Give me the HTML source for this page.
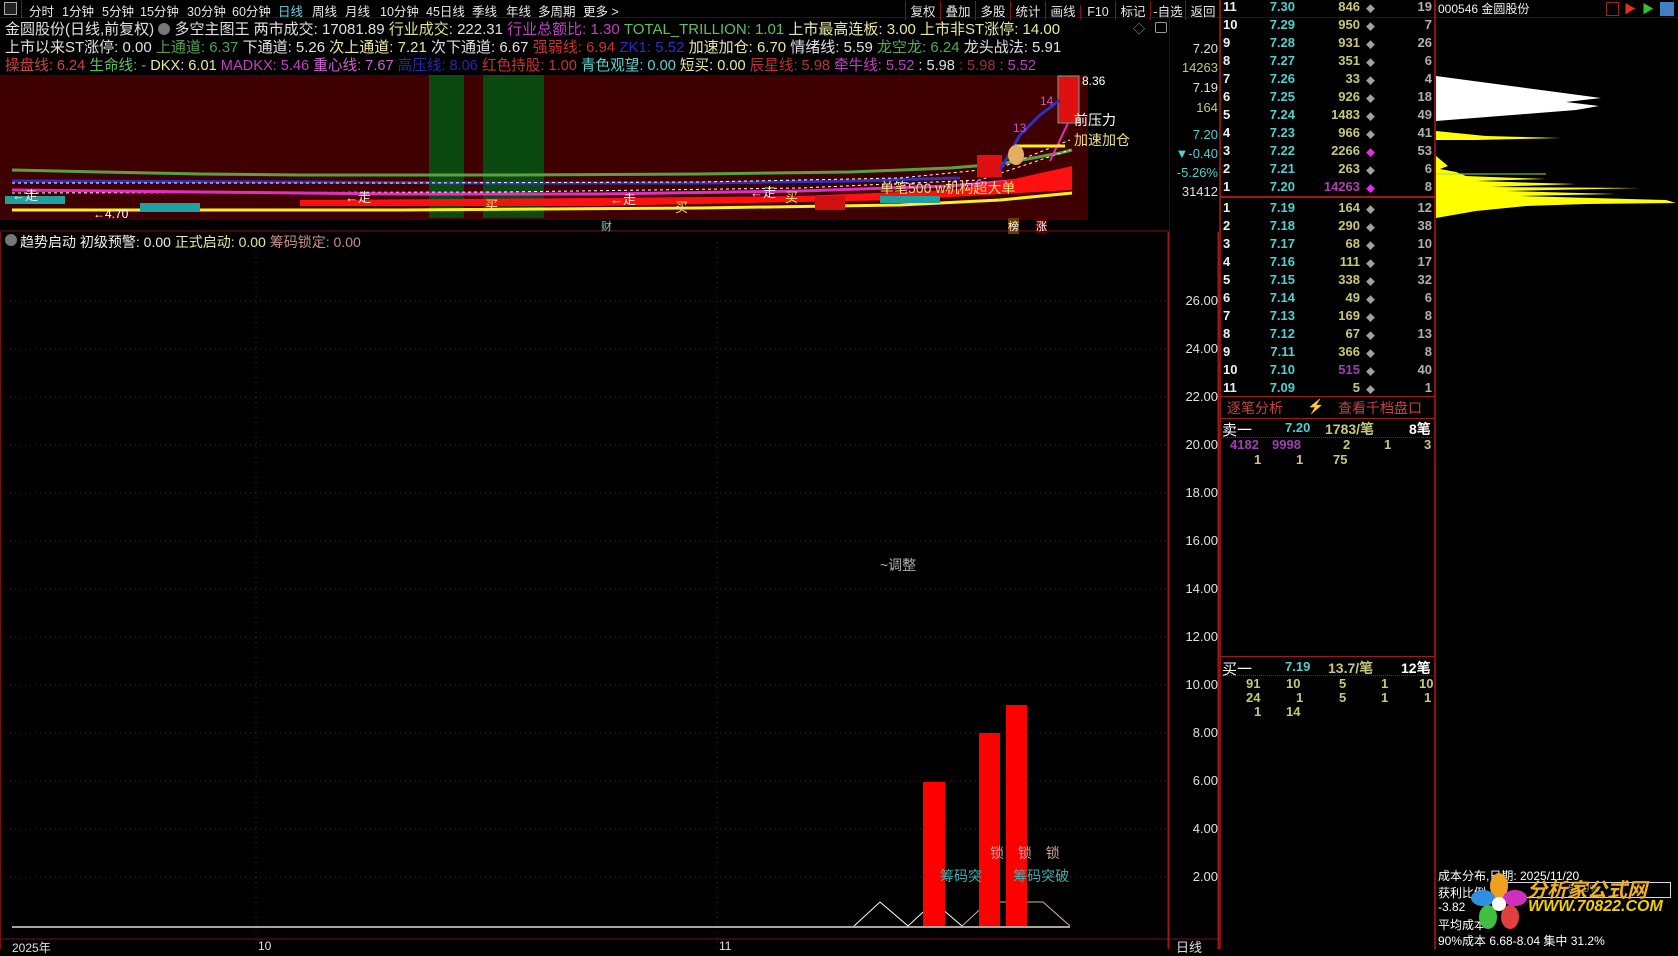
<!DOCTYPE html>
<html><head><meta charset="utf-8">
<style>
*{margin:0;padding:0;box-sizing:border-box}
body{width:1678px;height:949px;background:#000;overflow:hidden;position:relative;font-family:"Liberation Sans","Noto Sans CJK SC",sans-serif;color:#e0e0e0}
.a{position:absolute;white-space:nowrap}
.tb{font-size:12.5px;top:1px;color:#e8e8e8;position:absolute;white-space:nowrap}
.info{font-size:15px;left:5px}
.ob{font-size:13px;font-weight:bold;font-family:"Liberation Sans","Noto Sans CJK SC",sans-serif}
.r{position:absolute;height:18px;left:1220px;width:215px;font-size:13px;font-weight:bold}
.r span{position:absolute;top:0}
.n{left:3px;color:#f0f0f0}
.p{right:140px;color:#50d0d0}
.v{right:75px;color:#c8c878}
.d{left:146px;color:#a0a0a0;font-size:9px;top:3px!important}
.c{right:3px;color:#b0b0b0}
.ax{position:absolute;font-size:13px;color:#e0e0e0;right:460px;text-align:right}
.g{color:#c8c878}
</style></head><body>

<!-- top toolbar -->
<div class="a" style="left:0;top:0;width:1678px;height:18px;background:#000;border-bottom:1px solid #5a0000"></div>
<div class="a" style="left:4px;top:2px;width:13px;height:13px;border:1px solid #aaa;background:#222"></div>
<div class="a" style="left:21px;top:0;width:1px;height:18px;background:#8a1010"></div>
<span class="tb" style="left:29px">分时</span>
<span class="tb" style="left:62px">1分钟</span>
<span class="tb" style="left:102px">5分钟</span>
<span class="tb" style="left:140px">15分钟</span>
<span class="tb" style="left:187px">30分钟</span>
<span class="tb" style="left:232px">60分钟</span>
<span class="tb" style="left:278px;color:#70d0e0">日线</span>
<span class="tb" style="left:312px">周线</span>
<span class="tb" style="left:345px">月线</span>
<span class="tb" style="left:380px">10分钟</span>
<span class="tb" style="left:426px">45日线</span>
<span class="tb" style="left:472px">季线</span>
<span class="tb" style="left:506px">年线</span>
<span class="tb" style="left:538px">多周期</span>
<span class="tb" style="left:583px">更多 &gt;</span>
<div class="tb" style="left:905px">
<span style="display:inline-block;width:35px;text-align:center;border-left:1px solid #8a1010">复权</span><span style="display:inline-block;width:35px;text-align:center;border-left:1px solid #8a1010">叠加</span><span style="display:inline-block;width:35px;text-align:center;border-left:1px solid #8a1010">多股</span><span style="display:inline-block;width:35px;text-align:center;border-left:1px solid #8a1010">统计</span><span style="display:inline-block;width:35px;text-align:center;border-left:1px solid #8a1010">画线</span><span style="display:inline-block;width:35px;text-align:center;border-left:1px solid #8a1010">F10</span><span style="display:inline-block;width:35px;text-align:center;border-left:1px solid #8a1010">标记</span><span style="display:inline-block;width:35px;text-align:center;border-left:1px solid #8a1010">-自选</span><span style="display:inline-block;width:35px;text-align:center;border-left:1px solid #8a1010">返回</span></div>

<!-- info lines -->
<div class="a info" style="top:18px">金圆股份(日线,前复权) <span style="display:inline-block;width:12px;height:12px;border-radius:6px;background:#777;vertical-align:-1px"></span> 多空主图王 两市成交: 17081.89 <span style="color:#e0e090">行业成交</span>: 222.31 <span style="color:#c040c0">行业总额比: 1.30</span> <span style="color:#60c060">TOTAL_TRILLION: 1.01</span> <span style="color:#e8e8a0">上市最高连板: 3.00 上市非ST涨停: 14.00</span></div>
<div class="a info" style="top:36px">上市以来ST涨停: 0.00 <span style="color:#50a050">上通道: 6.37</span> 下通道: 5.26 <span style="color:#e8e8a0">次上通道: 7.21</span> 次下通道: 6.67 <span style="color:#d03030">强弱线: 6.94</span> <span style="color:#3030c0">ZK1: 5.52</span> <span style="color:#e8e8a0">加速加仓: 6.70</span> 情绪线: 5.59 <span style="color:#50b050">龙空龙: 6.24</span> 龙头战法: 5.91</div>
<div class="a info" style="top:54px;font-size:14.6px"><span style="color:#d04040">操盘线: 6.24</span> <span style="color:#60c060">生命线: -</span> <span style="color:#e8e8a0">DKX: 6.01</span> <span style="color:#c040c0">MADKX: 5.46</span> <span style="color:#d060d0">重心线: 7.67</span> <span style="color:#2828a8">高压线: 8.06</span> <span style="color:#d03030">红色持股: 1.00</span> <span style="color:#60d0d0">青色观望: 0.00</span> <span style="color:#e8e8a0">短买: 0.00</span> <span style="color:#c03030">辰星线: 5.98</span> <span style="color:#c040c0">牵牛线: 5.52</span> : 5.98 <span style="color:#a03030">: 5.98</span> <span style="color:#c040c0">: 5.52</span></div>
<div class="a" style="left:1133px;top:20px;font-size:12px;color:#999">◇</div>
<div class="a" style="left:1155px;top:22px;width:12px;height:11px;border:1px solid #999;border-radius:2px"></div>

<!-- upper chart -->
<svg class="a" style="left:0;top:0" width="1170" height="232">
<rect x="0" y="75" width="1088" height="145" fill="#3e0000"/>
<rect x="429" y="75" width="35" height="143" fill="#0a4a10"/>
<rect x="483" y="75" width="61" height="143" fill="#0a4a10"/>
<line x1="0" y1="231" x2="1170" y2="231" stroke="#7a1010"/>
<polyline fill="none" stroke="#5aa040" stroke-width="3" points="12,170 100,172 200,174 300,175 500,175 700,174 850,172 950,168 1000,164 1060,153 1072,150"/>
<polyline fill="none" stroke="#3030c0" stroke-width="3" points="12,181 300,182 500,183 700,183 850,181 960,178"/>
<polyline fill="none" stroke="#fff" stroke-width="1" stroke-dasharray="3,3" points="12,183 400,183 700,182 900,178 1000,168 1070,140"/>
<polyline fill="none" stroke="#fff" stroke-width="1" stroke-dasharray="3,3" points="12,193 500,192 800,188 980,180 1070,150"/>
<polyline fill="none" stroke="#e030c0" stroke-width="3" points="12,190 200,192 400,194 600,194 800,191 950,186 1070,176"/>
<polygon fill="#ff1010" points="300,200 600,198 800,196 950,190 1010,180 1072,166 1072,190 900,200 600,206 300,206"/>
<polyline fill="none" stroke="#ffee20" stroke-width="3" points="12,210 400,210 700,208 900,205 1000,200 1072,193"/>
<rect x="5" y="196" width="60" height="8" fill="#20a0a0"/>
<rect x="140" y="203" width="60" height="8" fill="#20a0a0"/>
<rect x="880" y="196" width="60" height="7" fill="#20a0a0"/>
<rect x="815" y="196" width="30" height="14" fill="#d01010"/>
<rect x="977" y="155" width="25" height="22" fill="#e01010"/>
<rect x="1058" y="76" width="21" height="47" fill="#e01010" stroke="#6aa0a0"/>
<polyline fill="none" stroke="#3030c0" stroke-width="3" points="1000,170 1020,135 1040,115 1060,100"/>
<line x1="1050" y1="161" x2="1068" y2="123" stroke="#e030c0" stroke-width="2"/>
<line x1="1015" y1="146" x2="1065" y2="146" stroke="#ffee20" stroke-width="3"/>
<ellipse cx="1016" cy="155" rx="8" ry="10" fill="#e0b060"/>
<line x1="1170" y1="18" x2="1170" y2="232" stroke="#7a1010"/>
<line x1="1170" y1="40" x2="1220" y2="40" stroke="#7a1010"/>
<line x1="1170" y1="206" x2="1220" y2="206" stroke="#7a1010"/>
</svg>
<div class="a" style="left:12px;top:185px;font-size:13px;color:#f0f0f0">←走</div>
<div class="a" style="left:93px;top:207px;font-size:12px;color:#fff">←4.70</div>
<div class="a" style="left:345px;top:187px;font-size:13px;color:#f0f0f0">←走</div>
<div class="a" style="left:485px;top:195px;font-size:13px;color:#f0e080">买</div>
<div class="a" style="left:610px;top:189px;font-size:13px;color:#f0f0f0">←走</div>
<div class="a" style="left:675px;top:197px;font-size:13px;color:#f0e080">买</div>
<div class="a" style="left:750px;top:182px;font-size:13px;color:#f0f0f0">←走</div>
<div class="a" style="left:785px;top:187px;font-size:13px;color:#f0e080">买</div>
<div class="a" style="left:880px;top:178px;font-size:14px;color:#f0e080">单笔500 w机构超大单</div>
<div class="a" style="left:1074px;top:110px;font-size:14px;color:#fff">前压力</div>
<div class="a" style="left:1074px;top:130px;font-size:14px;color:#f0e080">加速加仓</div>
<div class="a" style="left:1082px;top:74px;font-size:12px;color:#fff">8.36</div>
<div class="a" style="left:1040px;top:94px;font-size:12px;color:#d050d0">14</div>
<div class="a" style="left:1013px;top:121px;font-size:12px;color:#d050d0">13</div>
<div class="a" style="left:601px;top:218px;font-size:11px;color:#7cc">财</div>
<div class="a" style="left:1008px;top:218px;font-size:11px;color:#fff;background:#6a3a00">榜</div>
<div class="a" style="left:1036px;top:218px;font-size:11px;color:#fff;background:#500">涨</div>

<div class="ax" style="top:41px">7.20</div>
<div class="ax g" style="top:60px">14263</div>
<div class="ax" style="top:80px">7.19</div>
<div class="ax g" style="top:100px">164</div>
<div class="ax" style="top:127px;color:#50d0d0">7.20</div>
<div class="ax" style="top:146px;color:#50d0d0">▼-0.40</div>
<div class="ax" style="top:165px;color:#50d0d0">-5.26%</div>
<div class="ax" style="top:184px">31412</div>

<!-- lower panel -->
<div class="a" style="left:5px;top:234px;width:12px;height:12px;border-radius:6px;background:#777"></div>
<div class="a" style="left:20px;top:232px;font-size:14px;color:#f0f0f0">趋势启动 初级预警: 0.00 <span style="color:#e8e8a0">正式启动: 0.00</span> <span style="color:#c89090">筹码锁定: 0.00</span></div>
<svg class="a" style="left:0;top:232px" width="1220" height="717">
<line x1="0.5" y1="0" x2="0.5" y2="717" stroke="#7a1010"/>
<g stroke="#5a2020" stroke-dasharray="1,4">
<line x1="256" y1="10" x2="256" y2="717"/><line x1="717" y1="10" x2="717" y2="717"/>
<line x1="0" y1="69" x2="1168" y2="69"/><line x1="0" y1="117" x2="1168" y2="117"/><line x1="0" y1="165" x2="1168" y2="165"/><line x1="0" y1="213" x2="1168" y2="213"/><line x1="0" y1="261" x2="1168" y2="261"/><line x1="0" y1="309" x2="1168" y2="309"/><line x1="0" y1="357" x2="1168" y2="357"/><line x1="0" y1="405" x2="1168" y2="405"/><line x1="0" y1="453" x2="1168" y2="453"/><line x1="0" y1="501" x2="1168" y2="501"/><line x1="0" y1="549" x2="1168" y2="549"/><line x1="0" y1="597" x2="1168" y2="597"/><line x1="0" y1="645" x2="1168" y2="645"/>
</g>
<line x1="12" y1="695" x2="1070" y2="695" stroke="#e8d8d0" stroke-width="1.5"/>
<polyline fill="none" stroke="#fff" points="854,694 880,670 908,694 934,670 962,694"/>
<polyline fill="none" stroke="#d8b0a0" points="962,694 988,670 1043,670 1070,694"/>
<rect x="923" y="550" width="22" height="144" fill="#ff0000"/>
<rect x="979" y="501" width="21" height="193" fill="#ff0000"/>
<rect x="1006" y="473" width="21" height="221" fill="#ff0000"/>
<line x1="0" y1="707" x2="1220" y2="707" stroke="#7a1010"/>
<line x1="1168.5" y1="0" x2="1168.5" y2="717" stroke="#a01818" stroke-width="2"/>
<line x1="1218.5" y1="0" x2="1218.5" y2="717" stroke="#a01818" stroke-width="2"/>
</svg>
<div class="a" style="left:880px;top:555px;font-size:14px;color:#b0b0b0">~调整</div>
<div class="a" style="left:990px;top:843px;font-size:14px;color:#d0a0a0;word-spacing:10px">锁 锁 锁</div>
<div class="a" style="left:940px;top:866px;font-size:14px;color:#40b0b0">筹码突&nbsp;&nbsp;&nbsp;&nbsp;&nbsp;&nbsp;&nbsp;&nbsp;筹码突破</div>
<div class="ax" style="top:293px">26.00</div>
<div class="ax" style="top:341px">24.00</div>
<div class="ax" style="top:389px">22.00</div>
<div class="ax" style="top:437px">20.00</div>
<div class="ax" style="top:485px">18.00</div>
<div class="ax" style="top:533px">16.00</div>
<div class="ax" style="top:581px">14.00</div>
<div class="ax" style="top:629px">12.00</div>
<div class="ax" style="top:677px">10.00</div>
<div class="ax" style="top:725px">8.00</div>
<div class="ax" style="top:773px">6.00</div>
<div class="ax" style="top:821px">4.00</div>
<div class="ax" style="top:869px">2.00</div>
<div class="a" style="left:12px;top:939px;font-size:12px">2025年</div>
<div class="a" style="left:258px;top:939px;font-size:12px">10</div>
<div class="a" style="left:719px;top:939px;font-size:12px">11</div>
<div class="a" style="left:1176px;top:937px;font-size:13px">日线</div>

<!-- order book -->
<div class="a" style="left:1219px;top:0;width:2px;height:949px;background:#8a1010"></div>
<div class="a" style="left:1434px;top:0;width:2px;height:949px;background:#8a1010"></div>
<div class="a" style="left:1220px;top:196px;width:215px;height:2px;background:#a01818"></div>
<div class="a" style="left:1220px;top:396px;width:215px;height:1px;background:#a01818"></div>
<div class="a" style="left:1220px;top:418px;width:215px;height:1px;background:#a01818"></div>
<div class="a" style="left:1220px;top:656px;width:215px;height:1px;background:#a01818"></div>
<div class="a" style="left:1222px;top:437px;width:212px;border-top:1px dotted #603030"></div>
<div class="a" style="left:1222px;top:675px;width:212px;border-top:1px dotted #603030"></div>

<div class="r" style="top:-1px"><span class="n">11</span><span class="p">7.30</span><span class="v">846</span><span class="d">◆</span><span class="c">19</span></div>
<div class="r" style="top:17px"><span class="n">10</span><span class="p">7.29</span><span class="v">950</span><span class="d">◆</span><span class="c">7</span></div>
<div class="r" style="top:35px"><span class="n">9</span><span class="p">7.28</span><span class="v">931</span><span class="d">◆</span><span class="c">26</span></div>
<div class="r" style="top:53px"><span class="n">8</span><span class="p">7.27</span><span class="v">351</span><span class="d">◆</span><span class="c">6</span></div>
<div class="r" style="top:71px"><span class="n">7</span><span class="p">7.26</span><span class="v">33</span><span class="d">◆</span><span class="c">4</span></div>
<div class="r" style="top:89px"><span class="n">6</span><span class="p">7.25</span><span class="v">926</span><span class="d">◆</span><span class="c">18</span></div>
<div class="r" style="top:107px"><span class="n">5</span><span class="p">7.24</span><span class="v">1483</span><span class="d">◆</span><span class="c">49</span></div>
<div class="r" style="top:125px"><span class="n">4</span><span class="p">7.23</span><span class="v">966</span><span class="d">◆</span><span class="c">41</span></div>
<div class="r" style="top:143px"><span class="n">3</span><span class="p">7.22</span><span class="v">2266</span><span class="d" style="color:#e030e0">◆</span><span class="c">53</span></div>
<div class="r" style="top:161px"><span class="n">2</span><span class="p">7.21</span><span class="v">263</span><span class="d">◆</span><span class="c">6</span></div>
<div class="r" style="top:179px"><span class="n">1</span><span class="p">7.20</span><span class="v" style="color:#b040b0">14263</span><span class="d" style="color:#e030e0">◆</span><span class="c">8</span></div>

<div class="r" style="top:200px"><span class="n">1</span><span class="p">7.19</span><span class="v">164</span><span class="d">◆</span><span class="c">12</span></div>
<div class="r" style="top:218px"><span class="n">2</span><span class="p">7.18</span><span class="v">290</span><span class="d">◆</span><span class="c">38</span></div>
<div class="r" style="top:236px"><span class="n">3</span><span class="p">7.17</span><span class="v">68</span><span class="d">◆</span><span class="c">10</span></div>
<div class="r" style="top:254px"><span class="n">4</span><span class="p">7.16</span><span class="v">111</span><span class="d">◆</span><span class="c">17</span></div>
<div class="r" style="top:272px"><span class="n">5</span><span class="p">7.15</span><span class="v">338</span><span class="d">◆</span><span class="c">32</span></div>
<div class="r" style="top:290px"><span class="n">6</span><span class="p">7.14</span><span class="v">49</span><span class="d">◆</span><span class="c">6</span></div>
<div class="r" style="top:308px"><span class="n">7</span><span class="p">7.13</span><span class="v">169</span><span class="d">◆</span><span class="c">8</span></div>
<div class="r" style="top:326px"><span class="n">8</span><span class="p">7.12</span><span class="v">67</span><span class="d">◆</span><span class="c">13</span></div>
<div class="r" style="top:344px"><span class="n">9</span><span class="p">7.11</span><span class="v">366</span><span class="d">◆</span><span class="c">8</span></div>
<div class="r" style="top:362px"><span class="n">10</span><span class="p">7.10</span><span class="v" style="color:#a040b0">515</span><span class="d">◆</span><span class="c">40</span></div>
<div class="r" style="top:380px"><span class="n">11</span><span class="p">7.09</span><span class="v">5</span><span class="d">◆</span><span class="c">1</span></div>

<div class="a" style="left:1227px;top:398px;font-size:14px;color:#c84040">逐笔分析</div>
<div class="a" style="left:1307px;top:398px;font-size:14px;color:#e8d040">⚡</div>
<div class="a" style="left:1338px;top:398px;font-size:14px;color:#c84040">查看千档盘口</div>

<div class="a" style="left:1222px;top:419px;font-size:15px;color:#fff">卖一</div>
<div class="a ob" style="left:1285px;top:420px;color:#50d0d0">7.20</div>
<div class="a ob" style="left:1325px;top:419px;color:#c8c878;font-size:14px">1783/笔</div>
<div class="a ob" style="left:1409px;top:419px;color:#fff;font-size:14px">8笔</div>
<div class="a ob" style="left:1230px;top:437px;color:#a040b0">4182</div>
<div class="a ob" style="left:1272px;top:437px;color:#a040b0">9998</div>
<div class="a ob" style="left:1343px;top:437px;color:#c8c878">2</div>
<div class="a ob" style="left:1384px;top:437px;color:#c8c878">1</div>
<div class="a ob" style="left:1424px;top:437px;color:#c8c878">3</div>
<div class="a ob" style="left:1254px;top:452px;color:#c8c878">1</div>
<div class="a ob" style="left:1296px;top:452px;color:#c8c878">1</div>
<div class="a ob" style="left:1333px;top:452px;color:#c8c878">75</div>

<div class="a" style="left:1222px;top:658px;font-size:15px;color:#fff">买一</div>
<div class="a ob" style="left:1285px;top:659px;color:#50d0d0">7.19</div>
<div class="a ob" style="left:1328px;top:658px;color:#c8c878;font-size:14px">13.7/笔</div>
<div class="a ob" style="left:1401px;top:658px;color:#fff;font-size:14px">12笔</div>
<div class="a ob" style="left:1246px;top:676px;color:#c8c878">91</div>
<div class="a ob" style="left:1286px;top:676px;color:#c8c878">10</div>
<div class="a ob" style="left:1339px;top:676px;color:#c8c878">5</div>
<div class="a ob" style="left:1381px;top:676px;color:#c8c878">1</div>
<div class="a ob" style="left:1419px;top:676px;color:#c8c878">10</div>
<div class="a ob" style="left:1246px;top:690px;color:#c8c878">24</div>
<div class="a ob" style="left:1296px;top:690px;color:#c8c878">1</div>
<div class="a ob" style="left:1339px;top:690px;color:#c8c878">5</div>
<div class="a ob" style="left:1381px;top:690px;color:#c8c878">1</div>
<div class="a ob" style="left:1424px;top:690px;color:#c8c878">1</div>
<div class="a ob" style="left:1254px;top:704px;color:#c8c878">1</div>
<div class="a ob" style="left:1286px;top:704px;color:#c8c878">14</div>

<!-- right panel -->
<div class="a" style="left:1438px;top:0;font-size:12px;color:#f0f0f0">000546 金圆股份</div>
<div class="a" style="left:1606px;top:2px;width:13px;height:14px;border:1px solid #a02020"></div>
<div class="a" style="left:1624px;top:0;font-size:12px;color:#e03020">▶</div>
<div class="a" style="left:1642px;top:0;font-size:12px;color:#30c030">▶</div>
<div class="a" style="left:1660px;top:2px;width:14px;height:14px;background:#4080c0"></div>
<svg class="a" style="left:1436px;top:70px" width="242" height="160">
<polygon fill="#fff" points="0,6 165,28 130,32 163,36 140,40 0,51"/>
<polygon fill="#ffff00" points="0,61 50,66 125,68 40,70 0,70"/>
<polygon fill="#ffff00" points="0,86 12,96 4,99 20,102 30,106 110,109 40,111 140,114 55,117 205,118 70,121 180,124 85,126 230,130 240,133 150,134 90,136 40,141 0,148"/>
<line x1="0" y1="104" x2="110" y2="104" stroke="#90e060"/>
</svg>
<div class="a" style="left:1438px;top:867px;font-size:12px;color:#fff">成本分布,日期: 2025/11/20</div>
<div class="a" style="left:1438px;top:884px;font-size:12px;color:#fff">获利比例</div>
<div class="a" style="left:1496px;top:882px;width:175px;height:16px;border:1px solid #ddd"></div>
<div class="a" style="left:1568px;top:883px;font-size:11px;color:#888">58.9%</div>
<div class="a" style="left:1438px;top:900px;font-size:12px;color:#fff">-3.82</div>
<div class="a" style="left:1438px;top:916px;font-size:12px;color:#fff">平均成本</div>
<div class="a" style="left:1438px;top:932px;font-size:12px;color:#fff">90%成本 6.68-8.04 集中 31.2%</div>
<svg class="a" style="left:1470px;top:872px" width="58" height="60">
<ellipse cx="29" cy="14" rx="9" ry="13" fill="#f0a020"/>
<ellipse cx="13" cy="26" rx="12" ry="8" fill="#3090e0"/>
<ellipse cx="45" cy="26" rx="12" ry="8" fill="#d030c0"/>
<ellipse cx="18" cy="45" rx="9" ry="12" fill="#40c040"/>
<ellipse cx="40" cy="45" rx="9" ry="12" fill="#e04040"/>
<circle cx="29" cy="32" r="7" fill="#fff"/>
</svg>
<div class="a" style="left:1527px;top:874px;font-size:20px;font-weight:bold;font-style:italic;color:#f0b020">分析家公式网</div>
<div class="a" style="left:1528px;top:898px;font-size:16px;font-weight:bold;font-style:italic;color:#f0d000">WWW.70822.COM</div>
</body></html>
